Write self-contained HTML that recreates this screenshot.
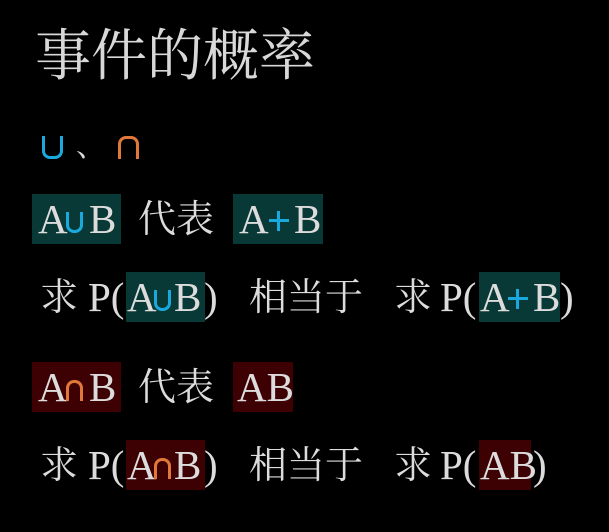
<!DOCTYPE html>
<html><head><meta charset="utf-8"><style>
body{margin:0;width:609px;height:532px;background:#000;overflow:hidden;position:relative;color:#dcdcdc;font-family:"Liberation Serif","Noto Serif CJK SC",serif}
.b{position:absolute}
.t{background:#093936}.r{background:#3d0103}
.x{position:absolute;white-space:pre;font-size:41px;line-height:50px}
.k{position:absolute;white-space:pre;font-size:38px;line-height:50px}
.u{position:absolute;width:11px;height:18px;border:3px solid #1aa9dc;border-top:none;border-radius:0 0 8px 8px}
.n{position:absolute;width:11px;height:18px;border:3px solid #e0783a;border-bottom:none;border-radius:8px 8px 0 0}
.p{position:absolute;width:20px;height:20px}
.p:before{content:"";position:absolute;left:0;top:8px;width:20px;height:3px;background:#1aa9dc}
.p:after{content:"";position:absolute;left:8px;top:0;width:3px;height:20px;background:#1aa9dc}
</style></head><body>
<div class="x" style="left:35px;top:25px;font-size:56px;line-height:64px;color:#d8d8d8">事件的概率</div>
<div class="u" style="left:42px;top:136px;width:15px;height:20px"></div>
<div class="k" style="left:76px;top:122px;font-size:30px">、</div>
<div class="n" style="left:118px;top:136px;width:15px;height:20px"></div>

<div class="b t" style="left:32px;top:194px;width:89px;height:50px"></div>
<div class="b t" style="left:233px;top:194px;width:90px;height:50px"></div>
<div class="x" style="left:38px;top:194px">A</div><div class="u" style="left:66px;top:212px"></div><div class="x" style="left:89px;top:194px">B</div>
<div class="k" style="left:138px;top:195px">代表</div>
<div class="x" style="left:239px;top:194px">A</div><div class="p" style="left:269px;top:211px"></div><div class="x" style="left:294px;top:194px">B</div>

<div class="b t" style="left:126px;top:272px;width:79px;height:50px"></div>
<div class="b t" style="left:479px;top:272px;width:81px;height:50px"></div>
<div class="k" style="left:40px;top:273px">求</div>
<div class="x" style="left:88px;top:272px">P(</div>
<div class="x" style="left:127px;top:272px">A</div><div class="u" style="left:154px;top:290px"></div><div class="x" style="left:174px;top:272px">B</div><div class="x" style="left:204px;top:272px">)</div>
<div class="k" style="left:249px;top:273px">相当于</div>
<div class="k" style="left:394px;top:273px">求</div>
<div class="x" style="left:440px;top:272px">P(</div>
<div class="x" style="left:480px;top:272px">A</div><div class="p" style="left:508px;top:289px"></div><div class="x" style="left:533px;top:272px">B</div><div class="x" style="left:560px;top:272px">)</div>

<div class="b r" style="left:32px;top:362px;width:89px;height:50px"></div>
<div class="b r" style="left:233px;top:362px;width:60px;height:50px"></div>
<div class="x" style="left:38px;top:362px">A</div><div class="n" style="left:66px;top:380px"></div><div class="x" style="left:89px;top:362px">B</div>
<div class="k" style="left:138px;top:363px">代表</div>
<div class="x" style="left:237px;top:362px">AB</div>

<div class="b r" style="left:126px;top:440px;width:79px;height:50px"></div>
<div class="b r" style="left:479px;top:440px;width:52px;height:50px"></div>
<div class="k" style="left:40px;top:441px">求</div>
<div class="x" style="left:88px;top:440px">P(</div>
<div class="x" style="left:127px;top:440px">A</div><div class="n" style="left:154px;top:458px"></div><div class="x" style="left:174px;top:440px">B</div><div class="x" style="left:204px;top:440px">)</div>
<div class="k" style="left:249px;top:441px">相当于</div>
<div class="k" style="left:394px;top:441px">求</div>
<div class="x" style="left:440px;top:440px">P(</div>
<div class="x" style="left:480px;top:440px">AB</div><div class="x" style="left:533px;top:440px">)</div>
</body></html>
